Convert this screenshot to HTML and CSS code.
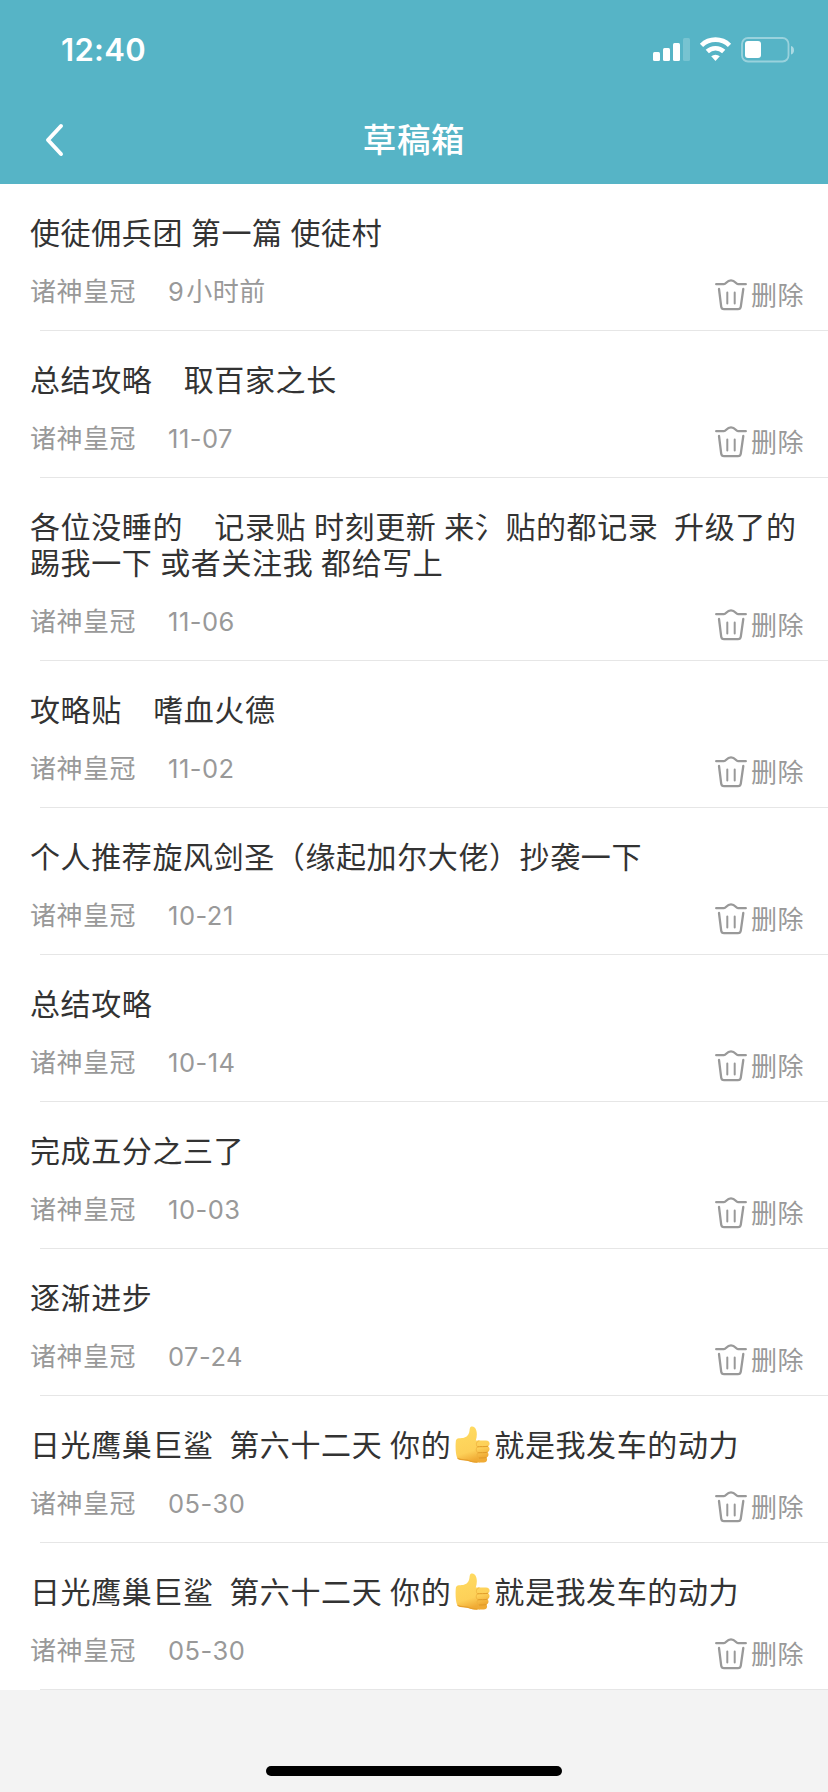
FILE: index.html
```html
<!DOCTYPE html>
<html lang="zh-CN">
<head>
<meta charset="utf-8">
<title>草稿箱</title>
<link rel="stylesheet" href="styles.css">
</head>
<body>
<svg class="sprite" aria-hidden="true">
  <defs>
    <linearGradient id="skin" x1="0" y1="0" x2="0.3" y2="1">
      <stop offset="0" stop-color="#ffdc62"/><stop offset="0.75" stop-color="#fdd058"/><stop offset="1" stop-color="#f0ab35"/>
    </linearGradient>
  </defs>
  <symbol id="trash" viewBox="0 0 32 32">
    <g fill="none" stroke="currentColor" stroke-width="2.300" stroke-linecap="round" stroke-linejoin="round">
      <path d="M1.2 5.2H9C11.2 5.2 11.6 1.3 16 1.3S20.8 5.2 23 5.2H30.8"/>
      <path d="M4 10L6.2 27.6Q6.6 30.2 9 30.2H23Q25.400 30.200 25.800 27.600L28.300 10"/>
      <path d="M12.300 13.500V24.500M19.700 13.500V24.500" stroke-width="2"/>
    </g>
  </symbol>
  <symbol id="thumb" viewBox="0 0 35 37">
    <path fill="url(#skin)" d="M.8 15.500C.8 13.600 2 12.600 4 12.300C8 12.200 11.500 11.700 13.300 8.500C14.800 6.200 14.300 3.600 15 1.800C15.900-.1 18.300.3 19.600 1.600C22.500 4.600 22.200 10 20.800 14.500H31C35.200 14.500 35.600 19.400 32.900 20.200C35.400 21.600 34.900 25.400 32.400 26.200C34.400 27.700 33.500 31 31.400 31.500C33 33.500 31.700 36.500 28.600 36.500H21C16.500 36.500 14.500 34.700 11.500 34.400C8 34.300 3.500 34.400 2 31.500C.6 28 .3 20 .8 15.500Z"/>
    <path fill="none" stroke="#e09a28" stroke-width="1" stroke-linecap="round" d="M32.700 20.300C29 21 25.500 20.400 22.500 20.800M32.200 26.300C29 27 26 26.400 23 26.800M31.200 31.600C28 32.100 26 31.900 23.800 32"/>
    <path fill="none" stroke="#eeb03c" stroke-width=".8" stroke-linecap="round" d="M24 14.800C21 15.500 20.700 19.200 22.500 20.800C20.500 22.600 21 25.500 23 26.800C21.500 28.300 21.900 31 23.800 32C22.600 33.500 23.100 35.300 24.600 36"/>
    <path fill="none" stroke="#e6a02c" stroke-width="1.200" stroke-linecap="round" d="M3 32.500C6 34.200 11 33.600 14 34.700C16.500 35.900 19 36.100 22 36.100"/>
  </symbol>
</svg>

<header class="header">
  <div class="status">
    <span class="clock">12:40</span>
    <svg class="indicators" viewBox="0 0 142 26" fill="#fff">
      <rect x="0" y="15" width="7" height="9" rx="1.500"/>
      <rect x="10" y="11" width="7" height="13" rx="1.500"/>
      <rect x="20" y="6" width="7" height="18" rx="1.500"/>
      <rect x="30" y="1" width="7" height="23" rx="1.500" opacity=".2"/>
      <g fill="none" stroke="#fff" stroke-width="4.600">
        <path d="M48.500 8.300A20 20 0 0 1 76.500 8.300"/>
        <path d="M54.300 14.500A11.800 11.800 0 0 1 70.700 14.500"/>
      </g>
      <path d="M58.200 19.300A6.500 6.500 0 0 1 66.800 19.300L62.500 24Z"/>
      <rect x="89" y="1" width="46.500" height="23.500" rx="6" fill="none" stroke="#fff" stroke-width="1.800" opacity=".4"/>
      <path d="M138 9V17.500Q141 16.500 141 13.200T138 9Z" opacity=".5"/>
      <rect x="92" y="4" width="16" height="17" rx="3"/>
    </svg>
  </div>
  <nav class="navbar">
    <svg class="back" viewBox="0 0 20 34"><path d="M16 3L3 17L16 31" fill="none" stroke="#fff" stroke-width="4" stroke-linecap="round" stroke-linejoin="round"/></svg>
    <h1 class="heading">草稿箱</h1>
  </nav>
</header>

<main class="drafts">
  <article class="draft">
    <h2 class="title">使徒佣兵团 第一篇 使徒村</h2>
    <div class="meta"><span class="forum">诸神皇冠</span><time class="date">9<span class="unit">小时前</span></time><span class="delete"><svg class="bin"><use href="#trash"/></svg><span class="label">删除</span></span></div>
  </article>
  <article class="draft">
    <h2 class="title">总结攻略    取百家之长</h2>
    <div class="meta"><span class="forum">诸神皇冠</span><time class="date">11-07</time><span class="delete"><svg class="bin"><use href="#trash"/></svg><span class="label">删除</span></span></div>
  </article>
  <article class="draft">
    <h2 class="title">各位没睡的    记录贴 时刻更新 来氵贴的都记录  升级了的踢我一下 或者关注我 都给写上</h2>
    <div class="meta"><span class="forum">诸神皇冠</span><time class="date">11-06</time><span class="delete"><svg class="bin"><use href="#trash"/></svg><span class="label">删除</span></span></div>
  </article>
  <article class="draft">
    <h2 class="title">攻略贴    嗜血火德</h2>
    <div class="meta"><span class="forum">诸神皇冠</span><time class="date">11-02</time><span class="delete"><svg class="bin"><use href="#trash"/></svg><span class="label">删除</span></span></div>
  </article>
  <article class="draft">
    <h2 class="title">个人推荐旋风剑圣（缘起加尔大佬）抄袭一下</h2>
    <div class="meta"><span class="forum">诸神皇冠</span><time class="date">10-21</time><span class="delete"><svg class="bin"><use href="#trash"/></svg><span class="label">删除</span></span></div>
  </article>
  <article class="draft">
    <h2 class="title">总结攻略</h2>
    <div class="meta"><span class="forum">诸神皇冠</span><time class="date">10-14</time><span class="delete"><svg class="bin"><use href="#trash"/></svg><span class="label">删除</span></span></div>
  </article>
  <article class="draft">
    <h2 class="title">完成五分之三了</h2>
    <div class="meta"><span class="forum">诸神皇冠</span><time class="date">10-03</time><span class="delete"><svg class="bin"><use href="#trash"/></svg><span class="label">删除</span></span></div>
  </article>
  <article class="draft">
    <h2 class="title">逐渐进步</h2>
    <div class="meta"><span class="forum">诸神皇冠</span><time class="date">07-24</time><span class="delete"><svg class="bin"><use href="#trash"/></svg><span class="label">删除</span></span></div>
  </article>
  <article class="draft">
    <h2 class="title">日光鹰巢巨鲨  第六十二天 你的<svg class="emoji" role="img" aria-label="👍"><use href="#thumb"/></svg>就是我发车的动力</h2>
    <div class="meta"><span class="forum">诸神皇冠</span><time class="date">05-30</time><span class="delete"><svg class="bin"><use href="#trash"/></svg><span class="label">删除</span></span></div>
  </article>
  <article class="draft">
    <h2 class="title">日光鹰巢巨鲨  第六十二天 你的<svg class="emoji" role="img" aria-label="👍"><use href="#thumb"/></svg>就是我发车的动力</h2>
    <div class="meta"><span class="forum">诸神皇冠</span><time class="date">05-30</time><span class="delete"><svg class="bin"><use href="#trash"/></svg><span class="label">删除</span></span></div>
  </article>
</main>
<footer class="footer"><div class="home-bar"></div></footer>
</body>
</html>
```

FILE: styles.css
```css
* { box-sizing: border-box; }

body {
  margin: 0;
  min-height: 1792px;
  display: flex;
  flex-direction: column;
  background: #f3f3f3;
  color: #333;
  font-family: Inter, "Noto Sans CJK SC", sans-serif;
}

.sprite { position: absolute; width: 0; height: 0; }

.header { height: 184px; background: #56b4c6; color: #fff; }

.status {
  height: 100px;
  padding: 0 33px 0 61px;
  display: flex;
  align-items: center;
  justify-content: space-between;
}
.clock { font-size: 31px; font-weight: 600; letter-spacing: .3px; line-height: 36px; }
.indicators { width: 142px; height: 26px; }

.navbar {
  height: 80px;
  padding: 0 45px;
  display: grid;
  grid-template-columns: 20px 1fr 20px;
  align-items: center;
}
.back { width: 20px; height: 34px; }
.heading {
  margin: 0;
  font-size: 33.500px;
  font-weight: 500;
  letter-spacing: .7px;
  line-height: 40px;
  text-align: center;
}

.drafts { background: #fff; }

.draft {
  padding: 31px 24px 21px 30px;
  background: linear-gradient(#e6e6e6, #e6e6e6) 40px 100% / 100% 1px no-repeat;
}
.title {
  margin: 0 0 21px;
  font-size: 30px;
  font-weight: 400;
  letter-spacing: .6px;
  word-spacing: -1.200px;
  line-height: 36px;
  white-space: pre-wrap;
}
.emoji { width: 35px; height: 37px; margin: -6px 4px -9px; vertical-align: 2.500px; }

.meta {
  height: 38px;
  display: flex;
  align-items: center;
  color: #999;
  font-size: 26px;
  letter-spacing: .5px;
  line-height: 38px;
}
.forum, .date, .label { padding-top: 1px; }
.date { margin-left: 32px; font-size: 25.500px; }
.unit { margin-left: 2px; font-size: 26px; }
.delete {
  margin: 8px 0 0 auto;
  display: flex;
  align-items: center;
  gap: 4px;
}
.bin { width: 32px; height: 32px; }

.footer {
  flex: 1;
  padding-bottom: 16px;
  display: flex;
  align-items: flex-end;
  justify-content: center;
}
.home-bar { width: 296px; height: 10px; border-radius: 5px; background: #000; }
```
